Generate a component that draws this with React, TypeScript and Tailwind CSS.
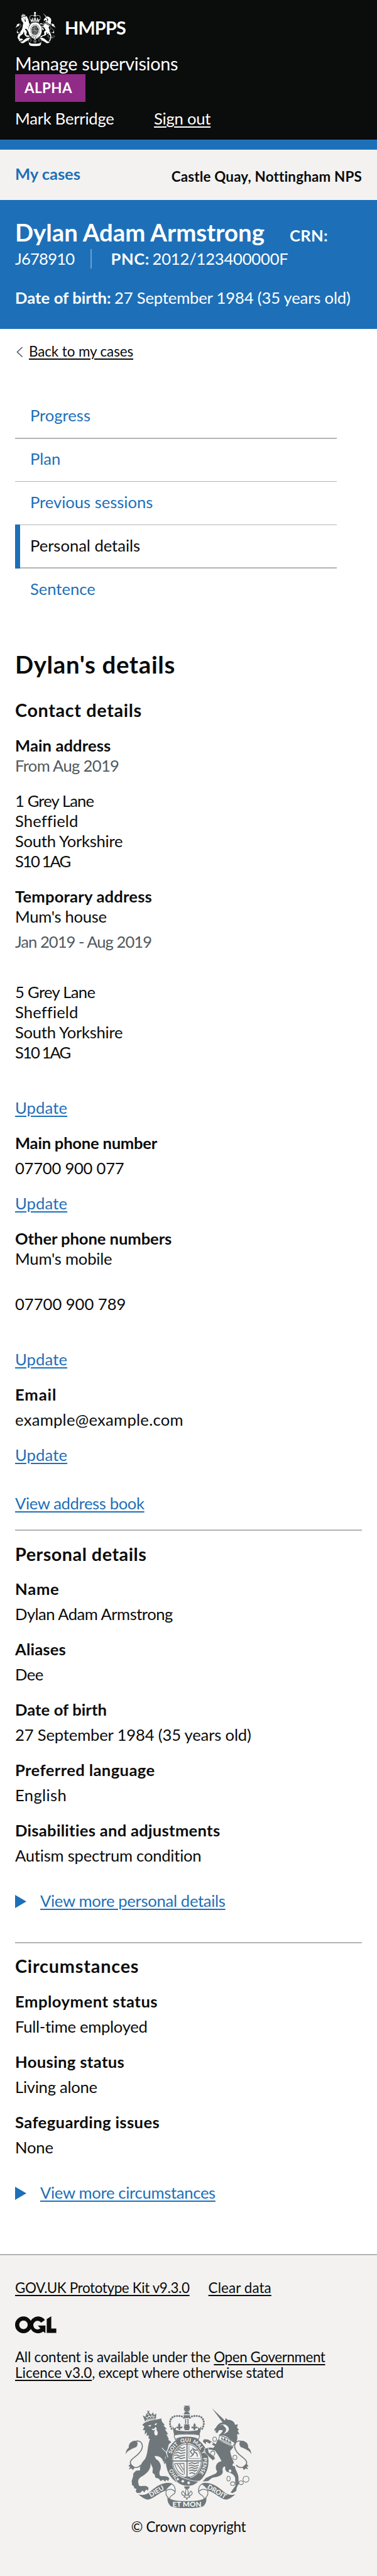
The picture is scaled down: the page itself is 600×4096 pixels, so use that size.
import React from "react";

type LineProps = { children: React.ReactNode; className?: string };

const Label = ({ children, className = "" }: LineProps) => (
  <dt className={`text-[25.6px] leading-[32px] font-bold ${className}`}>{children}</dt>
);

const Value = ({ children, className = "" }: LineProps) => (
  <dd className={`text-[25.6px] leading-[32px] ${className}`}>{children}</dd>
);

const Link = ({ children, className = "" }: LineProps) => (
  <a href="#" className={`underline decoration-[1.6px] underline-offset-[3px] ${className}`}>
    {children}
  </a>
);

const UpdateLink = ({ className = "" }: { className?: string }) => (
  <Value className={className}>
    <Link className="tracking-[0.005em] text-[#1d70b8]">Update</Link>
  </Value>
);

const Heading = ({ children, className = "" }: LineProps) => (
  <h2 className={`text-[28.8px] leading-[36px] font-bold ${className}`}>{children}</h2>
);

const Disclosure = ({ children, className = "" }: LineProps) => (
  <div className={`flex items-center text-[25.6px] leading-[32px] text-[#1d70b8] ${className}`}>
    <svg viewBox="0 0 18 21" className="mt-[3px] mr-[22px] h-[21px] w-[18px]" fill="currentColor">
      <path d="M0 0 18 10.5 0 21z" />
    </svg>
    <Link className="tracking-[-0.012em]">{children}</Link>
  </div>
);

const RibbonEnd = () => (
  <>
    <path d="M136 597 C155 600 175 600 192 590 C225 565 260 526 318 526 L340 532 C322 548 308 556 300 573 C262 580 225 625 190 627 C168 625 152 606 136 597Z" />
    <path
      d="M326 530 C348 536 359 556 355 585 C345 602 325 600 322 622 M303 572 C325 560 345 566 354 580 M303 572 C296 590 302 606 316 616"
      fill="none"
      stroke="currentColor"
      strokeWidth="4.5"
    />
  </>
);

const Tail = () => (
  <>
    <path
      d="M150 420 C135 440 105 440 92 420 C80 398 95 388 115 372 C150 345 168 315 155 290 C148 276 130 274 115 280"
      fill="none"
      stroke="currentColor"
      strokeWidth="6"
    />
    <path d="M60 357 C61 335 70 322 79 317 C76 305 84 286 96 282 C106 274 116 274 126 280 C136 290 130 303 124 312 C106 320 92 326 84 332 C74 336 64 345 60 357Z" />
    <path d="M90 412 L76 428 L88 430 L78 446 L94 441 L104 450 L114 434Z" />
  </>
);

const CrownSide = () => (
  <>
    <path
      d="M334 203 C316 172 322 128 366 127 C390 127 404 130 412 142"
      fill="none"
      stroke="currentColor"
      strokeWidth="12"
      strokeLinecap="round"
      strokeDasharray="0.1 14.5"
    />
    <path d="M338 186 L350 202 L362 192 L358 212 L346 216Z" />
    <path d="M380 168 L388 184 L384 192 L398 190 L398 200 L386 202 L386 212 L376 212 L376 202 L364 200 L364 190 L376 192 L372 182Z" />
  </>
);

/* Royal coat of arms: lion and unicorn supporting the garter, crown above, motto ribbon below. */
const Arms = ({ className, ground, motto }: { className: string; ground: string; motto?: boolean }) => (
  <svg viewBox="60 65 750 614" preserveAspectRatio="none" className={className} fill="currentColor">
    <defs>
      <path id="garter" d="M426 507 A97 113 0 0 1 426 281 A97 113 0 0 1 426 507" />
    </defs>

    <g>
      <path d="M159 180 L175 166 L205 155 L240 150 L273 142 L276 160 L294 182 L285 183 L306 206 L294 206 L314 237 L303 236 L318 266 L312 268 L333 283 L318 296 C312 312 310 330 316 346 L330 388 L337 412 L327 424 L318 408 L312 426 L302 412 L297 418 L286 406 L293 396 L283 400 L280 388 C270 372 250 364 232 368 L242 385 C262 395 275 420 268 445 C262 460 258 470 266 485 C285 490 306 480 321 500 L314 516 L302 508 L296 520 L284 508 L268 516 L258 502 L246 498 L236 494 L234 478 L220 466 L222 440 L208 408 C212 440 195 462 170 480 C150 492 135 500 134 520 L139 543 C158 552 180 536 197 557 L192 574 L182 566 L172 584 L160 572 L148 586 L128 587 L120 578 L124 562 L112 560 L108 546 L98 540 L96 515 L104 490 L106 470 L122 454 L146 452 C142 430 155 405 175 385 C195 350 188 310 205 264 L196 262 L198 242 L184 246 L188 224 L174 238 L175 212 L162 212 L172 192Z" />
      <path d="M176 160 L162 124 L178 132 L184 112 L194 122 L202 108 L212 120 L224 104 L228 122 L243 112 L240 148 C218 148 194 152 176 160Z" />
      <path d="M188 94 L196 98 L203 96 L198 106 L204 112 L186 116 L192 104Z" />
      <path d="M180 154 C200 145 220 143 238 142 M180 134 L190 141 L199 126 L209 136 L217 124 L225 136 L234 126" fill="none" stroke={ground} strokeWidth="4" />
      <path d="M192 185 L214 180 L206 192Z M230 177 L248 168 L241 183Z M214 202 L228 205 L240 192 L246 205 L242 210 C256 222 254 242 242 244 C228 242 228 222 236 210 L224 213Z" fill={ground} />
    </g>
    <Tail />

    <g transform="translate(870) scale(-1 1)"><Tail /></g>

    <g>
      <path d="M575 81 L655 157 L640 167Z" />
      <path d="M589 208 L600 195 C608 180 620 168 640 165 L652 158 L657 139 L668 150 C698 150 712 168 712 180 L730 178 L724 196 L736 210 L728 215 L739 236 L725 236 L727 262 L718 291 C700 285 680 262 665 253 C650 243 634 240 614 244 C628 234 638 224 640 212 L618 212 L606 230 L594 222 L602 213 L590 215Z" />
      <path d="M622 184 L640 179 L648 190 C668 204 660 222 642 236 C676 225 684 205 668 188 C655 174 636 174 622 184Z" fill={ground} />
      <path d="M621 243 C655 252 684 268 712 288 L699 309 C675 290 645 278 615 270Z" fill={ground} stroke="currentColor" strokeWidth="4" />
      <path d="M628 266 L634 252 L642 270 L652 255 L660 278 L668 264 L676 286 L684 272 L692 296 C672 284 650 274 628 266Z" />
      <path d="M609 268 C640 285 680 300 703 314 L684 336 C686 370 706 395 712 430 C714 450 737 475 733 505 L735 533 C728 545 722 552 720 575 L700 587 L686 585 L698 568 L715 545 L713 495 C705 476 690 468 672 463 C654 460 652 440 655 430 C644 426 634 438 640 460 C640 485 605 492 575 497 L552 516 L520 519 L538 498 L562 487 L600 470 L606 458 C590 440 598 402 632 398 C620 370 605 352 594 335 C575 330 562 325 552 328 L556 345 L590 370 L594 383 L580 393 L564 378 L536 350 L530 322 L560 316 L584 318 L592 306 L560 292 L540 280 L538 296 L520 280 L528 266 L552 268 L598 296Z" />
      <g fill={ground}>
        <ellipse cx="706" cy="419" rx="8" ry="9" />
        <ellipse cx="683" cy="455" rx="8" ry="9" />
        <circle cx="572" cy="291" r="8" />
      </g>
      <g fill={ground} stroke="currentColor" strokeWidth="4">
        <ellipse cx="591" cy="266" rx="11" ry="13" />
        <ellipse cx="580" cy="350" rx="12" ry="13" />
        <ellipse cx="712" cy="375" rx="12" ry="13" />
        <ellipse cx="674" cy="502" rx="10" ry="14" />
        <ellipse cx="699" cy="532" rx="13" ry="11" />
        <ellipse cx="749" cy="526" rx="13" ry="11" />
        <circle cx="778" cy="505" r="18" />
      </g>
    </g>

    <ellipse cx="427" cy="396" rx="130" ry="149" stroke={ground} strokeWidth="5" />
    <ellipse cx="426" cy="395" rx="90" ry="106" fill={ground} />
    <ellipse cx="426" cy="395" rx="85" ry="100" fill={motto ? "none" : "currentColor"} stroke="currentColor" strokeWidth="4" />
    {!motto && <ellipse cx="426" cy="395" rx="72" ry="86" fill={ground} />}
    <path d="M426 290 V498 M338 396 H514" fill="none" stroke="currentColor" strokeWidth="7" />
    <g fill="none" stroke="currentColor" strokeWidth="6" strokeLinecap="round">
      <path d="M368 322 L386 316 L398 322 L412 314 M362 334 L380 328 L394 336 L414 330 M356 350 L372 344 L388 352 L414 346 M352 362 L368 360 L382 368 L412 362 M354 380 L372 374 L390 382 L414 376" />
      <path d="M438 412 L456 406 L470 412 L496 406 M438 424 L452 420 L472 428 L494 422 M438 440 L456 434 L470 442 L492 436 M440 454 L458 450 L472 456 L486 450 M442 470 L456 466 L472 472" />
      <path d="M448 370 L462 360 L470 342 L484 350 L488 368 M462 360 L446 340 L456 328 M470 342 L462 322 L476 332 L490 330" />
      <path d="M352 412 L408 410 L410 474 M352 414 C362 440 372 470 404 478 M368 416 L400 462 M384 416 L404 448" strokeWidth="4.5" />
      <path d="M438 304 V382 H502" strokeWidth="3" />
    </g>
    <path d="M412 490 H442 L446 500 H408Z" />
    <path d="M352 496 C372 482 384 480 392 492 C430 508 470 520 498 516 C476 540 448 548 426 546 C400 546 376 532 364 520Z" stroke={ground} strokeWidth="4" />
    <g fill={ground}>
      <circle cx="401" cy="517" r="8" />
      <circle cx="436" cy="527" r="8" />
      <circle cx="371" cy="505" r="7" />
    </g>
    {motto && (
      <g fill={ground} fontFamily="Lato, sans-serif" fontWeight="900" fontSize="31" textAnchor="middle">
        <text><textPath href="#garter" startOffset="93">HO</textPath></text>
        <text><textPath href="#garter" startOffset="240">SOIT</textPath></text>
        <text><textPath href="#garter" startOffset="322">QUI</textPath></text>
        <text><textPath href="#garter" startOffset="396">MAL</textPath></text>
        <text><textPath href="#garter" startOffset="448">Y</textPath></text>
        <text><textPath href="#garter" startOffset="527">PENSE</textPath></text>
      </g>
    )}
    <path d="M272 316 L334 380 L340 412 L326 426 L318 408 L312 426 L300 412 L290 398 L300 376Z" />
    <path d="M276 318 L302 344 L312 374" fill="none" stroke={ground} strokeWidth="4" />
    {motto && <path d="M536 350 L530 322 L552 316 L556 345 L590 370 L594 383 L580 393 L564 378Z" stroke={ground} strokeWidth="3" />}

    <g>
      <CrownSide />
      <g transform="translate(851) scale(-1 1)"><CrownSide /></g>
      <path d="M408 66 H443 L433 78 L443 72 V95 L433 88 L442 100 H409 L418 88 L408 95 V72 L418 78Z" />
      <path d="M425 99 C436 102 443 110 444 118 H406 C408 108 414 102 425 99Z M406 122 H444 C444 134 438 140 425 140 C412 140 406 134 406 122Z" />
      <path d="M418 144 V176 M432 144 V176" stroke="currentColor" strokeWidth="6" />
      <path d="M408 178 L442 178 L436 190 L442 184 V206 L436 200 L440 212 H410 L415 200 L408 206 V184 L415 190Z" />
      <path d="M342 206 C380 222 470 222 509 206 L500 244 C460 230 390 230 350 244Z" />
      <path d="M350 250 C345 238 365 236 425 236 C486 236 506 238 501 250 L494 268 C470 248 380 248 357 268Z" fill={ground} stroke="currentColor" strokeWidth="4.5" />
    </g>

    <g>
      <RibbonEnd />
      <g transform="translate(851) scale(-1 1)"><RibbonEnd /></g>
      <path d="M309 613 C335 634 380 636 425 636 C470 636 516 634 542 613 C543 642 535 656 525 665 C500 682 350 682 328 665 C315 652 309 640 309 613Z" />
      <path d="M409 548 H443 L438 562 H413Z" />
      <path
        d="M425 560 C412 578 416 590 422 602 C415 602 414 590 402 576 C388 584 394 602 408 602 L414 604 L408 612 L420 614 L425 626 L431 614 L443 612 L437 604 L443 602 C458 602 462 584 449 576 C437 590 436 602 429 602 C435 590 438 578 425 560Z"
        fill={ground}
        stroke="currentColor"
        strokeWidth="4.5"
      />
    </g>
    {motto && (
      <g fill={ground} fontFamily="Lato, sans-serif" fontWeight="900" textAnchor="middle">
        <text fontSize="40" transform="translate(251 589) rotate(-31)">DIEU</text>
        <text fontSize="40" transform="translate(597 591) rotate(31)">DROIT</text>
        <text x="426" y="671" fontSize="44">ET MON</text>
      </g>
    )}
  </svg>
);

const NavItem = ({ children, last, current }: { children: string; last?: boolean; current?: boolean }) => (
  <li
    className={`flex h-[68.8px] flex-col justify-between ${current ? "text-[#0b0c0c]" : "text-[#1d70b8]"}`}
  >
    <span className="pt-[15.6px] pl-[24px] text-[25.6px] leading-[32px] tracking-[-0.001em]">{children}</span>
    {!last && <span className="h-[1.6px] bg-[#b1b4b6]" />}
  </li>
);

const Rule = ({ className = "" }: { className?: string }) => (
  <div className={`h-[1.6px] bg-[#b1b4b6] ${className}`} />
);

export default function App() {
  return (
    <div className="flex h-[4096px] w-[600px] flex-col overflow-hidden bg-white font-['Lato',sans-serif] text-[#0b0c0c]">
      <header className="h-[222.4px] shrink-0 bg-[#0b0c0c] px-[24px] pt-[19.2px] text-white">
        <div className="flex h-[54.4px] gap-[15px]">
          <Arms ground="#0b0c0c" className="ml-[1px] h-[54.4px] w-[63px]" />
          <span className="pt-[6.4px] text-[28.8px] leading-[36px] font-bold tracking-[-0.027em]">HMPPS</span>
        </div>
        <div className="mt-[9.4px] h-[35.4px] text-[28.8px] leading-[36px] tracking-[-0.01em]">Manage supervisions</div>
        <div className="flex h-[43.2px] w-[112px] items-center bg-[#912b88] pl-[15px] text-[22.4px] leading-[28px] font-bold tracking-[0.019em]">
          ALPHA
        </div>
        <div className="mt-[10.8px] flex text-[25.6px] leading-[32px] tracking-[-0.009em]">
          <span className="w-[221px]">Mark Berridge</span>
          <Link>Sign out</Link>
        </div>
      </header>
      <div className="h-[16px] shrink-0 bg-[#1d70b8]" />
      <div className="flex h-[80px] shrink-0 justify-between bg-[#f3f2f1] px-[24px] font-bold">
        <a href="#" className="pt-[21.8px] text-[25.6px] leading-[32px] tracking-[-0.003em] text-[#1d70b8]">My cases</a>
        <span className="pt-[28.4px] text-[22.4px] leading-[28px] tracking-[0.008em]">Castle Quay, Nottingham NPS</span>
      </div>

      <section className="h-[204.8px] shrink-0 bg-[#1d70b8] px-[24px] pt-[26.6px] text-[25.6px] text-white">
        <div className="flex h-[49.8px] items-baseline">
          <h1 className="w-[437px] text-[38.4px] leading-[48px] font-bold tracking-[-0.001em] whitespace-nowrap">Dylan Adam Armstrong</h1>
          <b className="leading-[48px] tracking-[0.012em]">CRN:</b>
        </div>
        <div className="flex h-[32px] items-center leading-[32px]">
          <span className="w-[120px] tracking-[-0.031em]">J678910</span>
          <span className="mt-[1.6px] mr-[31px] h-[30.4px] w-[1.6px] bg-[#6c9fd0]" />
          <b className="w-[66px] tracking-[0.022em]">PNC:</b>
          <span className="tracking-[-0.008em]">2012/123400000F</span>
        </div>
        <div className="mt-[30.4px] flex leading-[32px]">
          <b className="w-[158px] tracking-[0.003em]">Date of birth:</b>
          <span className="tracking-[-0.006em]">27 September 1984 (35 years old)</span>
        </div>
      </section>

      <div className="flex h-[105.6px] shrink-0 px-[24px] pt-[22px] text-[22.4px] leading-[28px] tracking-[-0.004em]">
        <svg viewBox="0 0 12 18" className="mt-[5.5px] mr-[9px] ml-[2px] h-[17.5px] w-[11px]" fill="none" stroke="#505a5f" strokeWidth="1.7">
          <path d="M10.5 .6 1.6 9l8.9 8.4" />
        </svg>
        <div><Link>Back to my cases</Link></div>
      </div>

      <nav className="h-[399.2px] shrink-0 px-[24px]">
        <ul className="w-[512px]">
          <NavItem>Progress</NavItem>
          <NavItem>Plan</NavItem>
          <NavItem>Previous sessions</NavItem>
          <div className="relative">
            <NavItem current>Personal details</NavItem>
            <span className="absolute -top-[1.6px] left-0 h-[70.4px] w-[8px] bg-[#1d70b8]" />
          </div>
          <NavItem last>Sentence</NavItem>
        </ul>
      </nav>

      <main className="h-[2556px] shrink-0 px-[24px]">
        <h1 className="mt-[3.6px] text-[38.4px] leading-[48px] font-bold tracking-[0.017em]">Dylan's details</h1>
        <Heading className="mt-[31.8px] tracking-[0.022em]">Contact details</Heading>
        <dl>
          <Label className="mt-[22px] tracking-[0.003em]">Main address</Label>
          <Value className="tracking-[-0.026em] text-[#505a5f]">From Aug 2019</Value>
          <Value className="mt-[24px]">
            <span className="tracking-[-0.034em]">1 Grey Lane</span><br />
            <span className="tracking-[0.005em]">Sheffield</span><br />
            <span className="tracking-[-0.011em]">South Yorkshire</span><br />
            <span className="tracking-[-0.074em]">S10 1AG</span>
          </Value>
          <Label className="mt-[24px] tracking-[0.007em]">Temporary address</Label>
          <Value className="tracking-[-0.011em]">Mum's house</Value>
          <Value className="mt-[8px] tracking-[-0.038em] text-[#505a5f]">Jan 2019 - Aug 2019</Value>
          <Value className="mt-[48px]">
            <span className="tracking-[-0.026em]">5 Grey Lane</span><br />
            <span className="tracking-[0.005em]">Sheffield</span><br />
            <span className="tracking-[-0.011em]">South Yorkshire</span><br />
            <span className="tracking-[-0.074em]">S10 1AG</span>
          </Value>
          <UpdateLink className="mt-[56px]" />
          <Label className="mt-[24px] tracking-[-0.009em]">Main phone number</Label>
          <Value className="mt-[8px] tracking-[-0.009em]">07700 900 077</Value>
          <UpdateLink className="mt-[24px]" />
          <Label className="mt-[24px] tracking-[-0.003em]">Other phone numbers</Label>
          <Value className="tracking-[-0.008em]">Mum's mobile</Value>
          <Value className="mt-[40px]">07700 900 789</Value>
          <UpdateLink className="mt-[56px]" />
          <Label className="mt-[24px] tracking-[0.035em]">Email</Label>
          <Value className="mt-[8px] tracking-[0.011em]">example@example.com</Value>
          <UpdateLink className="mt-[24px]" />
        </dl>
        <p className="mt-[44.8px] text-[25.6px] leading-[32px]"><Link className="tracking-[-0.014em] text-[#1d70b8]">View address book</Link></p>

        <Rule className="mt-[26px]" />
        <Heading className="mt-[19px] tracking-[0.017em]">Personal details</Heading>
        <dl>
          <Label className="mt-[21.4px] tracking-[0.03em]">Name</Label>
          <Value className="mt-[8px] tracking-[-0.02em]">Dylan Adam Armstrong</Value>
          <Label className="mt-[24px] tracking-[0.007em]">Aliases</Label>
          <Value className="mt-[8px] tracking-[-0.02em]">Dee</Value>
          <Label className="mt-[24px] tracking-[0.003em]">Date of birth</Label>
          <Value className="mt-[8px] tracking-[-0.006em]">27 September 1984 (35 years old)</Value>
          <Label className="mt-[24px] tracking-[0.015em]">Preferred language</Label>
          <Value className="mt-[8px] tracking-[0.014em]">English</Value>
          <Label className="mt-[24px] tracking-[0.011em]">Disabilities and adjustments</Label>
          <Value className="mt-[8px] tracking-[-0.009em]">Autism spectrum condition</Value>
        </dl>
        <Disclosure className="mt-[40px]">View more personal details</Disclosure>

        <Rule className="mt-[50px]" />
        <Heading className="mt-[18.6px] tracking-[0.028em]">Circumstances</Heading>
        <dl>
          <Label className="mt-[21.8px] tracking-[0.02em]">Employment status</Label>
          <Value className="mt-[8px] tracking-[-0.011em]">Full-time employed</Value>
          <Label className="mt-[24px] tracking-[0.014em]">Housing status</Label>
          <Value className="mt-[8px] tracking-[-0.01em]">Living alone</Value>
          <Label className="mt-[24px] tracking-[0.015em]">Safeguarding issues</Label>
          <Value className="mt-[8px] tracking-[-0.007em]">None</Value>
        </dl>
        <Disclosure className="mt-[40px]">View more circumstances</Disclosure>
      </main>

      <footer className="flex-1 border-t-2 border-[#b1b4b6] bg-[#f3f2f1] px-[24px] pt-[39.4px] text-[22.4px] leading-[25.6px]">
        <div className="flex gap-[30px]">
          <Link className="tracking-[-0.016em]">GOV.UK Prototype Kit v9.3.0</Link>
          <Link className="tracking-[0.004em]">Clear data</Link>
        </div>
        <svg viewBox="12 27 246 101" preserveAspectRatio="none" className="mt-[32px] h-[27px] w-[65.6px]" fill="#0b0c0c">
          <path fillRule="evenodd" d="M62 28a50 50 0 1 0 0 100 50 50 0 0 0 0-100Zm0 24.500a25.500 25.500 0 1 1 0 51 25.500 25.500 0 0 1 0-51Z" />
          <path d="M190 49A50 50 0 1 0 180 118L193 128V82H148L163 99A25.500 25.500 0 1 1 167 65Z" />
          <path d="M201 44 228 27V100H258V126H201Z" />
        </svg>
        <p className="mt-[24.6px] whitespace-nowrap">
          <span className="tracking-[-0.011em]">All content is available under the </span>
          <Link className="tracking-[-0.018em]">Open Government</Link>
          <br />
          <Link className="tracking-[0.001em]">Licence v3.0</Link>
          <span className="tracking-[-0.011em]">, except where otherwise stated</span>
        </p>
        <div className="mt-[39.2px] flex flex-col items-center gap-[16.6px]">
          <Arms motto ground="#f3f2f1" className="h-[163.4px] w-[200px] text-[#6f777b]" />
          <a href="#" className="tracking-[-0.014em]">© Crown copyright</a>
        </div>
      </footer>
    </div>
  );
}
